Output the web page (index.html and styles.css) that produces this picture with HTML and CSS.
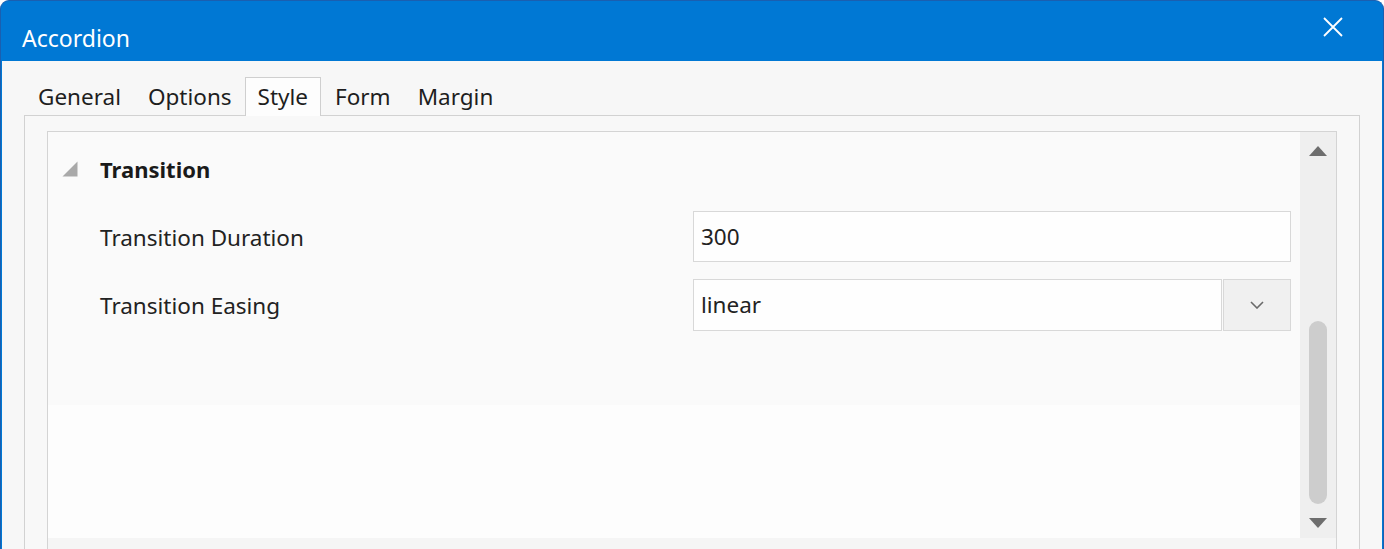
FILE: index.html
```html
<!DOCTYPE html>
<html lang="en">
<head>
<meta charset="utf-8">
<title>Accordion</title>
<link rel="stylesheet" href="styles.css">
</head>
<body>
<div class="window">
  <div class="titlebar">
    <span class="title">Accordion</span>
    <svg class="close" width="20" height="20" viewBox="0 0 20 20"><path d="M1 1 L19 19 M19 1 L1 19" stroke="#fff" stroke-width="1.8" fill="none"/></svg>
  </div>
  <div class="body">
    <div class="tabs">
      <div class="tab">General</div>
      <div class="tab">Options</div>
      <div class="tab active">Style</div>
      <div class="tab">Form</div>
      <div class="tab">Margin</div>
    </div>
    <div class="tabpanel">
      <div class="inner">
        <div class="content">
          <div class="main">
            <div class="props">
              <div class="section">
                <svg class="caret" width="16" height="16" viewBox="0 0 16 16"><polygon points="15.5,0.5 15.5,15.5 0.5,15.5" fill="#a9a9a9"/></svg>
                <span class="section-title">Transition</span>
              </div>
              <div class="row">
                <span class="label">Transition Duration</span>
                <div class="field">300</div>
              </div>
              <div class="row">
                <span class="label">Transition Easing</span>
                <div class="select">
                  <div class="field select-text">linear</div>
                  <div class="select-btn">
                    <svg width="14" height="8" viewBox="0 0 14 8"><path d="M1 1 L7 7 L13 1" stroke="#6a6a6a" stroke-width="1.6" fill="none"/></svg>
                  </div>
                </div>
              </div>
            </div>
            <div class="rest"></div>
          </div>
          <div class="scrollbar">
            <svg class="arrow" width="18" height="10" viewBox="0 0 18 10"><polygon points="9,0 18,10 0,10" fill="#6e6e6e"/></svg>
            <div class="track"><div class="thumb"></div></div>
            <svg class="arrow" width="18" height="10" viewBox="0 0 18 10"><polygon points="0,0 18,0 9,10" fill="#6e6e6e"/></svg>
          </div>
        </div>
        <div class="footer"></div>
      </div>
    </div>
  </div>
</div>
</body>
</html>
```

FILE: styles.css
```css
* { box-sizing: border-box; }
html, body { margin: 0; padding: 0; background: #ffffff; overflow: hidden; }
body { font-family: "Noto Sans", "Open Sans", sans-serif; color: #1e1e1e; }

.window {
  width: 1384px;
  height: 560px;
  background: #0078d4;
  border: 1px solid #1a5fb0;
  border-bottom: none;
  border-radius: 9px 9px 0 0;
  padding: 0 1px;
  display: flex;
  flex-direction: column;
}

.titlebar {
  height: 60px;
  display: flex;
  align-items: center;
  justify-content: space-between;
  padding: 14px 39px 0 20px;
  flex: none;
}
.title { color: #ffffff; font-size: 23px; line-height: 30px; }
.close { display: block; margin-top: -22px; }

.body {
  flex: 1;
  background: #f7f7f7;
  padding: 16px 22px 0 22px;
  display: flex;
  flex-direction: column;
}

.tabs { display: flex; position: relative; z-index: 1; height: 38px; }
.tab {
  font-size: 22.5px;
  line-height: 37px;
  padding: 0 12px 0 13px;
  border: 1px solid transparent;
  border-bottom: none;
  color: #1e1e1e;
}
.tab.active {
  background: #fdfdfd;
  border-color: #cfcfcf;
  height: 39px;
  padding: 0 12px;
}

.tabpanel {
  flex: 1;
  border: 1px solid #d2d2d2;
  border-bottom: none;
  background: #f8f8f8;
  padding: 15px 22px 0 22px;
  display: flex;
  flex-direction: column;
}

.inner {
  flex: 1;
  border: 1px solid #d4d4d4;
  border-bottom: none;
  display: flex;
  flex-direction: column;
}
.content { display: flex; height: 406px; flex: none; }
.main { flex: 1; display: flex; flex-direction: column; }
.props { height: 273px; background: #fafafa; padding: 19px 9px 0 14px; }
.rest { flex: 1; background: #fdfdfd; }
.footer { flex: 1; background: #f5f5f5; }

.section { display: flex; align-items: center; height: 36px; }
.caret { display: block; margin-top: 0; }
.section-title { font-weight: 700; font-size: 22px; margin-left: 22px; color: #1a1a1a; }

.row { display: flex; align-items: center; height: 51px; padding-left: 38px; margin-top: 17px; }
.section + .row { margin-top: 24px; }
.label { width: 593px; font-size: 22.5px; color: #222; flex: none; padding-top: 2px; }
.field {
  width: 598px;
  height: 51px;
  border: 1px solid #d8d8d8;
  background: #fefefe;
  font-size: 22.5px;
  line-height: 49px;
  padding-left: 7px;
  color: #222;
}
.select { display: flex; width: 598px; height: 52px; }
.select .select-text { width: 529px; height: 52px; line-height: 50px; }
.select-btn {
  width: 68px;
  height: 52px;
  border: 1px solid #d8d8d8;
  background: #f0f0f0;
  display: flex;
  align-items: center;
  justify-content: center;
  margin-left: 1px;
}

.scrollbar {
  width: 36px;
  background: #efefef;
  display: flex;
  flex-direction: column;
  align-items: center;
  padding: 14px 0 10px 0;
}
.arrow { display: block; flex: none; }
.track { flex: 1; width: 100%; display: flex; flex-direction: column; justify-content: flex-end; align-items: center; padding-bottom: 14px; }
.thumb { width: 18px; height: 183px; background: #cdcdcd; border-radius: 9px; }
```
